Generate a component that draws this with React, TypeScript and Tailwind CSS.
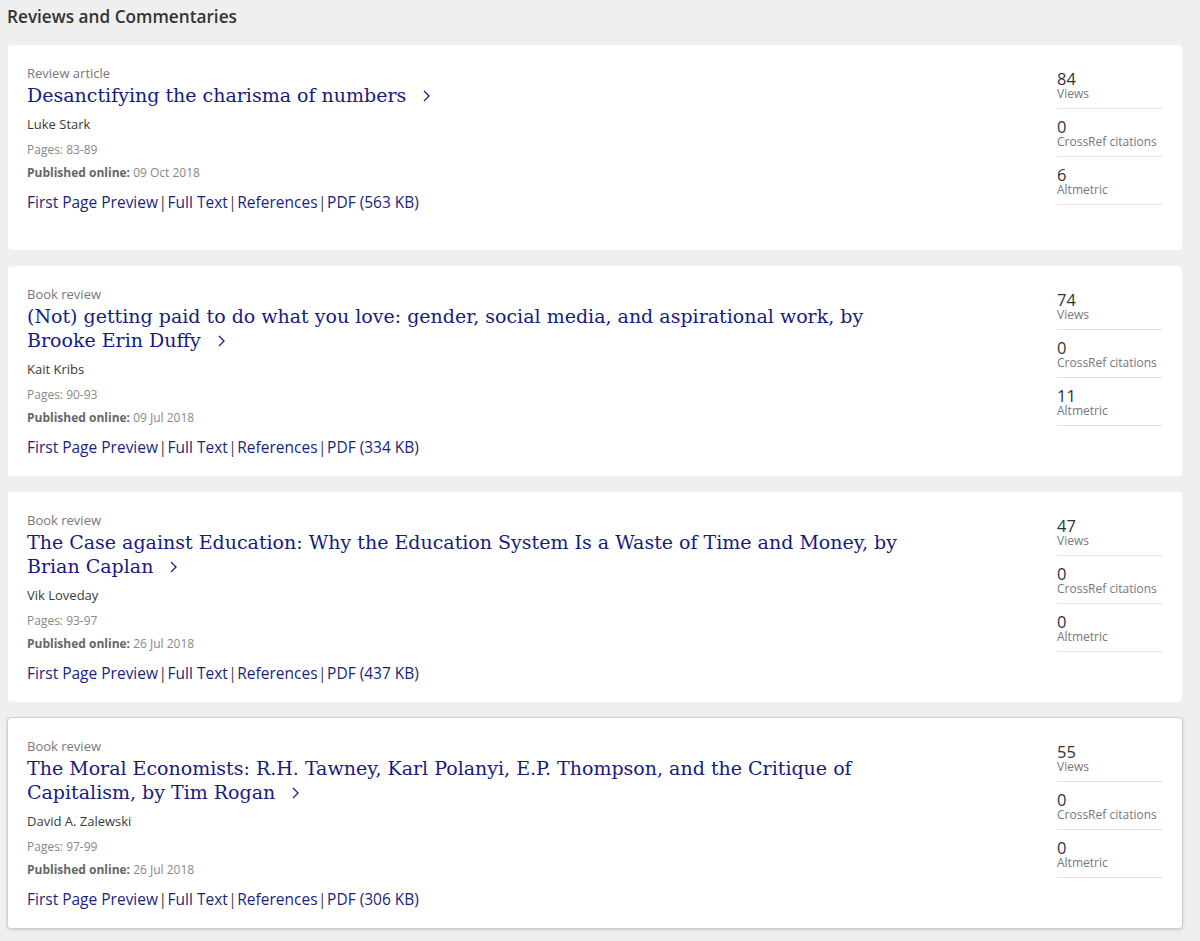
import React from "react";

type Item = {
  cat: string;
  title: string[];
  author: string;
  pages: string;
  date: string;
  pdf: string;
  views: string;
  cross: string;
  alt: string;
  hover?: boolean;
};

const items: Item[] = [
  {
    cat: "Review article",
    title: ["Desanctifying the charisma of numbers"],
    author: "Luke Stark",
    pages: "83-89",
    date: "09 Oct 2018",
    pdf: "563 KB",
    views: "84",
    cross: "0",
    alt: "6",
  },
  {
    cat: "Book review",
    title: [
      "(Not) getting paid to do what you love: gender, social media, and aspirational work, by",
      "Brooke Erin Duffy",
    ],
    author: "Kait Kribs",
    pages: "90-93",
    date: "09 Jul 2018",
    pdf: "334 KB",
    views: "74",
    cross: "0",
    alt: "11",
  },
  {
    cat: "Book review",
    title: [
      "The Case against Education: Why the Education System Is a Waste of Time and Money, by",
      "Brian Caplan",
    ],
    author: "Vik Loveday",
    pages: "93-97",
    date: "26 Jul 2018",
    pdf: "437 KB",
    views: "47",
    cross: "0",
    alt: "0",
  },
  {
    cat: "Book review",
    title: [
      "The Moral Economists: R.H. Tawney, Karl Polanyi, E.P. Thompson, and the Critique of",
      "Capitalism, by Tim Rogan",
    ],
    author: "David A. Zalewski",
    pages: "97-99",
    date: "26 Jul 2018",
    pdf: "306 KB",
    views: "55",
    cross: "0",
    alt: "0",
    hover: true,
  },
];

function Chevron() {
  return (
    <svg width="7" height="12" viewBox="0 0 7 12" className="inline-block ml-[17px] align-[0px]">
      <polyline points="1,1 6,6 1,11" fill="none" stroke="#1a1f7e" strokeWidth="1.3" />
    </svg>
  );
}

function Stat({ n, label, first }: { n: string; label: string; first?: boolean }) {
  return (
    <div className={"border-b border-[#e2e2e2] pb-[8px] " + (first ? "" : "pt-[9px]")}>
      <div className="text-[16.5px] leading-[17px] text-[#333]">{n}</div>
      <div className="text-[12px] leading-[13px] text-[#777]">{label}</div>
    </div>
  );
}

function Card({ it }: { it: Item }) {
  return (
    <div
      className={
        "bg-white rounded-[4px] flex items-start pl-[19px] pr-[20px] pt-[20px] pb-[19px] " +
        (it.hover ? "border border-[#cfcfcf] shadow-[0_1px_3px_rgba(0,0,0,0.15)] -mx-px -my-px" : "")
      }
    >
      <div className="flex-1">
        <div className="text-[13px] leading-[16px] text-[#777]">{it.cat}</div>
        <div
          className="mt-[2px] text-[19px] leading-[24px] text-[#171c7c]"
          style={{ fontFamily: '"DejaVu Serif", "Liberation Serif", serif' }}
        >
          {it.title.map((t, i) => (
            <div key={i} className="whitespace-nowrap">
              {t}
              {i === it.title.length - 1 && <Chevron />}
            </div>
          ))}
        </div>
        <div className="mt-[8px] text-[13px] leading-[18px] text-[#3a3a3a]">{it.author}</div>
        <div className="mt-[9px] text-[12px] leading-[16px] text-[#888]">Pages: {it.pages}</div>
        <div className="mt-[7px] text-[12px] leading-[16px] text-[#888]">
          <span className="font-bold text-[#666]">Published online:</span> {it.date}
        </div>
        <div className="mt-[11px] text-[15.5px] leading-[20px] text-[#1a1f7e]">
          <span>First Page Preview</span>
          <span className="text-[#444] mx-[0.5px]">|</span>
          <span>Full Text</span>
          <span className="text-[#444] mx-[0.5px]">|</span>
          <span>References</span>
          <span className="text-[#444] mx-[0.5px]">|</span>
          <span>PDF ({it.pdf})</span>
        </div>
      </div>
      <div className="w-[105px] pt-[5px] pb-[26px]">
        <Stat n={it.views} label="Views" first />
        <Stat n={it.cross} label="CrossRef citations" />
        <Stat n={it.alt} label="Altmetric" />
      </div>
    </div>
  );
}

export default function App() {
  return (
    <div
      className="w-[1200px] h-[941px] overflow-hidden bg-[#efefef]"
      style={{ fontFamily: '"Open Sans", "Liberation Sans", sans-serif' }}
    >
      <h2 className="pl-[7px] pt-[6px] text-[17.2px] leading-[22px] font-semibold text-[#333]">
        Reviews and Commentaries
      </h2>
      <div className="mt-[17px] ml-[8px] mr-[18px] flex flex-col gap-[16px]">
        {items.map((it, i) => (
          <Card key={i} it={it} />
        ))}
      </div>
    </div>
  );
}
